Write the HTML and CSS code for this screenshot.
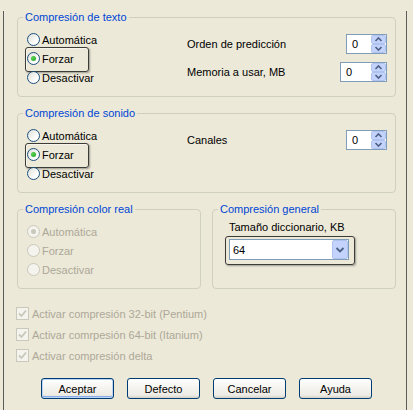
FILE: index.html
```html
<!DOCTYPE html>
<html lang="es">
<head>
<meta charset="utf-8">
<title>Compresión</title>
<link rel="stylesheet" href="styles.css">
</head>
<body>
<div class="win">
  <fieldset class="grp g1">
    <legend>Compresión de texto</legend>
    <div class="gbody">
      <div class="radios">
        <label class="radio"><span class="rb"></span>Automática</label>
        <label class="radio focus"><span class="rb on"></span>Forzar</label>
        <label class="radio"><span class="rb"></span>Desactivar</label>
      </div>
      <div class="fields">
        <div class="field"><span>Orden de predicción</span>
          <span class="spin w41"><span class="val">0</span>
            <svg class="spbtn" width="15" height="18" viewBox="0 0 15 18"><rect x="0.5" y="0.5" width="14" height="8" rx="1.5" fill="#C3D3FC" stroke="#AFC3EF"/><rect x="0.5" y="9.5" width="14" height="8" rx="1.5" fill="#C3D3FC" stroke="#AFC3EF"/><path d="M4.5 6 L7.5 3 L10.5 6" fill="none" stroke="#4D6185" stroke-width="1.6"/><path d="M4.5 12 L7.5 15 L10.5 12" fill="none" stroke="#4D6185" stroke-width="1.6"/></svg>
          </span></div>
        <div class="field"><span>Memoria a usar, MB</span>
          <span class="spin w47"><span class="val">0</span>
            <svg class="spbtn" width="15" height="18" viewBox="0 0 15 18"><rect x="0.5" y="0.5" width="14" height="8" rx="1.5" fill="#C3D3FC" stroke="#AFC3EF"/><rect x="0.5" y="9.5" width="14" height="8" rx="1.5" fill="#C3D3FC" stroke="#AFC3EF"/><path d="M4.5 6 L7.5 3 L10.5 6" fill="none" stroke="#4D6185" stroke-width="1.6"/><path d="M4.5 12 L7.5 15 L10.5 12" fill="none" stroke="#4D6185" stroke-width="1.6"/></svg>
          </span></div>
      </div>
    </div>
  </fieldset>

  <fieldset class="grp g2">
    <legend>Compresión de sonido</legend>
    <div class="gbody">
      <div class="radios">
        <label class="radio"><span class="rb"></span>Automática</label>
        <label class="radio focus"><span class="rb on"></span>Forzar</label>
        <label class="radio"><span class="rb"></span>Desactivar</label>
      </div>
      <div class="fields">
        <div class="field"><span>Canales</span>
          <span class="spin w41"><span class="val">0</span>
            <svg class="spbtn" width="15" height="18" viewBox="0 0 15 18"><rect x="0.5" y="0.5" width="14" height="8" rx="1.5" fill="#C3D3FC" stroke="#AFC3EF"/><rect x="0.5" y="9.5" width="14" height="8" rx="1.5" fill="#C3D3FC" stroke="#AFC3EF"/><path d="M4.5 6 L7.5 3 L10.5 6" fill="none" stroke="#4D6185" stroke-width="1.6"/><path d="M4.5 12 L7.5 15 L10.5 12" fill="none" stroke="#4D6185" stroke-width="1.6"/></svg>
          </span></div>
      </div>
    </div>
  </fieldset>

  <div class="row2">
    <fieldset class="grp">
      <legend>Compresión color real</legend>
      <div class="gbody">
        <div class="radios">
          <label class="radio dis"><span class="rb on"></span>Automática</label>
          <label class="radio dis"><span class="rb"></span>Forzar</label>
          <label class="radio dis"><span class="rb"></span>Desactivar</label>
        </div>
      </div>
    </fieldset>
    <fieldset class="grp g4">
      <legend>Compresión general</legend>
      <div class="gbody col">
        <div class="lbl">Tamaño diccionario, KB</div>
        <div class="combo"><span class="val">64</span>
          <svg class="cbtn" width="16" height="19" viewBox="0 0 16 19"><rect x="0.5" y="0.5" width="15" height="18" rx="1.5" fill="#C3D3FC" stroke="#AFC3EF"/><path d="M4.5 8 L8 11.5 L11.5 8" fill="none" stroke="#4D6185" stroke-width="1.8"/></svg>
        </div>
      </div>
    </fieldset>
  </div>

  <div class="checks">
    <label class="check"><span class="cb"><svg width="11" height="11" viewBox="0 0 11 11"><path d="M2 5.5 L4.5 8 L9 2.5" fill="none" stroke="#C9C7BA" stroke-width="1.8"/></svg></span>Activar compresión 32-bit (Pentium)</label>
    <label class="check"><span class="cb"><svg width="11" height="11" viewBox="0 0 11 11"><path d="M2 5.5 L4.5 8 L9 2.5" fill="none" stroke="#C9C7BA" stroke-width="1.8"/></svg></span>Activar comrpesión 64-bit (Itanium)</label>
    <label class="check"><span class="cb"><svg width="11" height="11" viewBox="0 0 11 11"><path d="M2 5.5 L4.5 8 L9 2.5" fill="none" stroke="#C9C7BA" stroke-width="1.8"/></svg></span>Activar compresión delta</label>
  </div>

  <div class="buttons">
    <button class="btn def">Aceptar</button>
    <button class="btn">Defecto</button>
    <button class="btn">Cancelar</button>
    <button class="btn">Ayuda</button>
  </div>
</div>
</body>
</html>
```

FILE: styles.css
```css
* { box-sizing: border-box; }
html, body { margin: 0; height: 100%; }
body {
  background: #ECE9D8;
  font: 11px "Liberation Sans", Arial, sans-serif;
  color: #000;
  overflow: hidden;
}
.win {
  margin-left: 3px;
  width: 404px;
  height: 410px;
  border-left: 1px solid #5c5c5a;
  border-right: 1px solid #5c5c5a;
  padding: 0 10px 0 13px;
}
.grp {
  margin: 0;
  padding: 0;
  border: 1px solid #D0D0BF;
  border-radius: 4px;
  min-width: 0;
}
.grp legend {
  color: #0046D5;
  padding: 0 2px;
  margin-left: 5px;
  line-height: 13px;
  font-size: 11px;
}
.g1 { margin-top: 11px; }
.g2 { margin-top: 10px; }
.row2 { display: flex; gap: 11px; margin-top: 10px; }
.row2 .grp { flex: 1; }
.gbody { display: flex; padding: 6px 8px 9px 9px; }
.gbody.col { flex-direction: column; padding: 4px 0 9px 16px; }
.radios { display: flex; flex-direction: column; }
.radio {
  position: relative;
  display: flex;
  align-items: center;
  gap: 2px;
  height: 19px;
}
.radio.focus::before {
  content: "";
  position: absolute;
  left: -2px;
  top: -2px;
  width: 62px;
  height: 23px;
  border: 1px solid #3c3c38;
  border-radius: 3px;
  box-shadow: 1px 1px 2px rgba(0,0,0,.35), inset 1px 1px 0 rgba(255,255,255,.5);
}
.rb {
  width: 13px;
  height: 13px;
  border-radius: 50%;
  border: 1px solid #1C5180;
  background: linear-gradient(135deg, #DCDCD5 0%, #FFFFFF 70%);
  display: flex;
  align-items: center;
  justify-content: center;
}
.rb.on::after {
  content: "";
  width: 5px;
  height: 5px;
  border-radius: 50%;
  background: radial-gradient(circle at 35% 35%, #55D451, #21A121);
}
.radio.dis { color: #ACA899; }
.radio.dis .rb { border-color: #CAC8BB; background: #F4F3EE; }
.radio.dis .rb.on::after { background: #CAC8BB; }
.fields {
  margin-left: auto;
  width: 200px;
  padding-top: 4px;
  display: flex;
  flex-direction: column;
  gap: 8px;
}
.field {
  display: flex;
  align-items: center;
  justify-content: space-between;
  height: 20px;
}
.spin {
  display: flex;
  align-items: center;
  justify-content: space-between;
  height: 20px;
  border: 1px solid #7F9DB9;
  background: #fff;
  padding: 0 0 0 5px;
}
.spin.w41 { width: 41px; }
.spin.w47 { width: 47px; }
.spbtn { display: block; }
.lbl { height: 13px; line-height: 13px; margin-top: 1px; }
.combo {
  position: relative;
  margin-top: 5px;
  width: 120px;
  height: 21px;
  border: 1px solid #7F9DB9;
  background: #fff;
  display: flex;
  align-items: center;
  justify-content: space-between;
  padding-left: 3px;
}
.combo::before {
  content: "";
  position: absolute;
  left: -5px;
  top: -4px;
  width: 128px;
  height: 27px;
  border: 1px solid #3c3c38;
  border-radius: 3px;
  box-shadow: 1px 1px 2px rgba(0,0,0,.35);
}
.cbtn { display: block; }
.checks {
  margin-top: 14px;
  margin-left: -1px;
  display: flex;
  flex-direction: column;
}
.check {
  display: flex;
  align-items: center;
  gap: 3px;
  height: 21px;
  color: #ACA899;
}
.cb {
  width: 13px;
  height: 13px;
  border: 1px solid #CAC8BB;
  background: #F4F3EE;
  display: flex;
  align-items: center;
  justify-content: center;
}
.cb svg { display: block; }
.buttons {
  margin-top: 12px;
  display: flex;
  justify-content: center;
  gap: 13px;
}
.btn {
  width: 73px;
  height: 21px;
  font: 11px "Liberation Sans", Arial, sans-serif;
  color: #000;
  border: 1px solid #003C74;
  border-radius: 3px;
  background: linear-gradient(#FFFFFF 0%, #F4F3EE 50%, #ECEBE6 85%, #D6D0C5 100%);
  padding: 0;
}
.btn.def {
  box-shadow: inset 0 0 0 1px #BCD4F6, inset 0 -1px 0 1px #89ADE4;
}
```
